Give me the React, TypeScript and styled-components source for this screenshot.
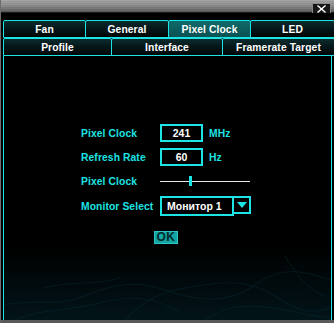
import React from 'react';
import styled, { createGlobalStyle } from 'styled-components';

const CYAN = '#1ce4e4';

const GlobalStyle = createGlobalStyle`
  html, body {
    margin: 0;
    padding: 0;
    background: #000;
  }
  body {
    font-family: "Liberation Sans", Arial, sans-serif;
  }
`;

const Window = styled.div`
  width: 334px;
  height: 323px;
  box-sizing: border-box;
  background: #000;
  border-left: 1px solid #6d6d6d;
  border-bottom: 3px solid #5a5a5a;
  display: flex;
  flex-direction: column;
  overflow: hidden;
`;

const TitleBar = styled.div`
  height: 13px;
  flex-shrink: 0;
  display: flex;
  justify-content: flex-end;
  align-items: flex-start;
  padding: 3px 3px 0 0;
  box-sizing: border-box;
  background:
    repeating-linear-gradient(180deg, rgba(255, 255, 255, 0.05) 0 1px, rgba(0, 0, 0, 0.04) 1px 2px),
    linear-gradient(180deg, #a3a3a3 0%, #8c8c8c 45%, #6a6a6a 80%, #555 100%);
  border-bottom: 1px solid #1c1c1c;
`;

const CloseButton = styled.div`
  width: 19px;
  height: 10px;
  background: #161616;
  border: 1px solid #888;
  border-bottom: none;
  box-sizing: border-box;
  display: flex;
  align-items: center;
  justify-content: center;
`;

const TabArea = styled.div`
  padding: 7px 2px 0 2px;
  display: flex;
  flex-direction: column;
  flex-shrink: 0;
`;

const TabRow = styled.div<{ $cols: string }>`
  display: grid;
  grid-template-columns: ${(p) => p.$cols};
  height: 18px;
`;

const Tab = styled.div<{ $active?: boolean }>`
  border: 1px solid ${CYAN};
  border-radius: 2px 2px 0 0;
  margin-left: -1px;
  display: flex;
  align-items: center;
  justify-content: center;
  color: #fff;
  font-weight: bold;
  font-size: 10.3px;
  letter-spacing: 0.1px;
  background: ${(p) =>
    p.$active
      ? 'linear-gradient(180deg, #0f6a6a 0%, #0a5252 100%)'
      : 'linear-gradient(180deg, #0b2c2e 0%, #041416 55%, #010606 100%)'};
  &:first-child {
    margin-left: 0;
  }
`;

const Panel = styled.div`
  position: relative;
  flex: 1;
  margin: 0 2px;
  border-left: 1px solid ${CYAN};
  border-right: 1px solid ${CYAN};
  background: linear-gradient(180deg, #000 0%, #000 72%, #021419 100%);
  display: flex;
  flex-direction: column;
  align-items: flex-start;
  padding-top: 68px;
  padding-left: 77px;
`;

const Cracks = styled.svg`
  position: absolute;
  left: 0;
  bottom: 0;
  width: 100%;
  height: 70px;
  pointer-events: none;
`;

const Form = styled.div`
  position: relative;
  display: grid;
  grid-template-columns: 79px 90px;
  row-gap: 6px;
  align-items: center;
`;

const Label = styled.div`
  color: ${CYAN};
  font-weight: bold;
  font-size: 10.3px;
  letter-spacing: 0.1px;
  white-space: nowrap;
`;

const Control = styled.div<{ $h: number }>`
  height: ${(p) => p.$h}px;
  display: flex;
  align-items: center;
`;

const NumberBox = styled.div`
  width: 43px;
  height: 18px;
  box-sizing: border-box;
  border: 2px solid ${CYAN};
  color: #fff;
  font-weight: bold;
  font-size: 10.5px;
  display: flex;
  align-items: center;
  justify-content: center;
`;

const Unit = styled.span`
  margin-left: 6px;
  color: ${CYAN};
  font-weight: bold;
  font-size: 10.3px;
  letter-spacing: 0.1px;
`;

const Track = styled.div`
  position: relative;
  width: 90px;
  height: 1px;
  background: #e8e8e8;
`;

const Thumb = styled.div`
  position: absolute;
  top: -5px;
  width: 3px;
  height: 10px;
  background: ${CYAN};
`;

const Select = styled.div`
  display: flex;
  align-items: flex-start;
  height: 20px;
`;

const SelectValue = styled.div`
  width: 74px;
  height: 20px;
  box-sizing: border-box;
  border: 2px solid ${CYAN};
  color: #fff;
  font-weight: bold;
  font-size: 10.5px;
  display: flex;
  align-items: center;
  padding-left: 5px;
  white-space: nowrap;
`;

const SelectArrow = styled.div`
  width: 17px;
  height: 18px;
  box-sizing: border-box;
  border: 2px solid ${CYAN};
  border-left: none;
  display: flex;
  align-items: center;
  justify-content: center;
`;

const OkButton = styled.div`
  margin-top: 15px;
  margin-left: 73px;
  width: 24px;
  height: 13px;
  box-sizing: border-box;
  background: #13a4a4;
  border: 1px solid #2cc6c6;
  color: #032a2a;
  font-weight: bold;
  font-size: 12px;
  letter-spacing: 0.5px;
  line-height: 11px;
  text-align: center;
`;

const topTabs = ['Fan', 'General', 'Pixel Clock', 'LED'];
const bottomTabs = ['Profile', 'Interface', 'Framerate Target'];

export default function App() {
  const sliderPos = 32; // percent of track

  return (
    <>
      <GlobalStyle />
      <Window>
        <TitleBar>
          <CloseButton>
            <svg width="11" height="8" viewBox="0 0 11 8">
              <path d="M1.5 0.5 L9.5 7.5 M9.5 0.5 L1.5 7.5" stroke="#fff" strokeWidth="1.4" />
            </svg>
          </CloseButton>
        </TitleBar>
        <TabArea>
          <TabRow $cols="83px 83px 82px 84px">
            {topTabs.map((t) => (
              <Tab key={t} $active={t === 'Pixel Clock'}>
                {t}
              </Tab>
            ))}
          </TabRow>
          <TabRow $cols="109px 111px 112px">
            {bottomTabs.map((t) => (
              <Tab key={t}>{t}</Tab>
            ))}
          </TabRow>
        </TabArea>
        <Panel>
          <Cracks viewBox="0 0 326 70" preserveAspectRatio="none">
            <g fill="none" stroke="#0a3440" strokeWidth="1" opacity="0.35">
              <path d="M0 55 C30 48 50 58 80 46 S130 30 160 40 S220 56 250 35 S300 22 326 30" />
              <path d="M10 70 C40 58 60 62 95 53 S150 48 175 62" />
              <path d="M120 70 C135 55 150 43 180 38 S240 26 270 46 S310 62 326 58" />
              <path d="M200 70 C215 60 230 54 260 57 S300 66 326 68" />
              <path d="M40 38 C70 30 90 36 115 28" />
              <path d="M280 6 C290 22 300 38 320 46" />
            </g>
          </Cracks>
          <Form>
            <Label>Pixel Clock</Label>
            <Control $h={18}>
              <NumberBox>241</NumberBox>
              <Unit>MHz</Unit>
            </Control>
            <Label>Refresh Rate</Label>
            <Control $h={18}>
              <NumberBox>60</NumberBox>
              <Unit>Hz</Unit>
            </Control>
            <Label>Pixel Clock</Label>
            <Control $h={18}>
              <Track>
                <Thumb style={{ left: `${sliderPos}%` }} />
              </Track>
            </Control>
            <Label>Monitor Select</Label>
            <Control $h={20}>
              <Select>
                <SelectValue>Монитор 1</SelectValue>
                <SelectArrow>
                  <svg width="10" height="6" viewBox="0 0 10 6">
                    <path d="M0 0 H10 L5 6 Z" fill={CYAN} />
                  </svg>
                </SelectArrow>
              </Select>
            </Control>
          </Form>
          <OkButton>OK</OkButton>
        </Panel>
      </Window>
    </>
  );
}
